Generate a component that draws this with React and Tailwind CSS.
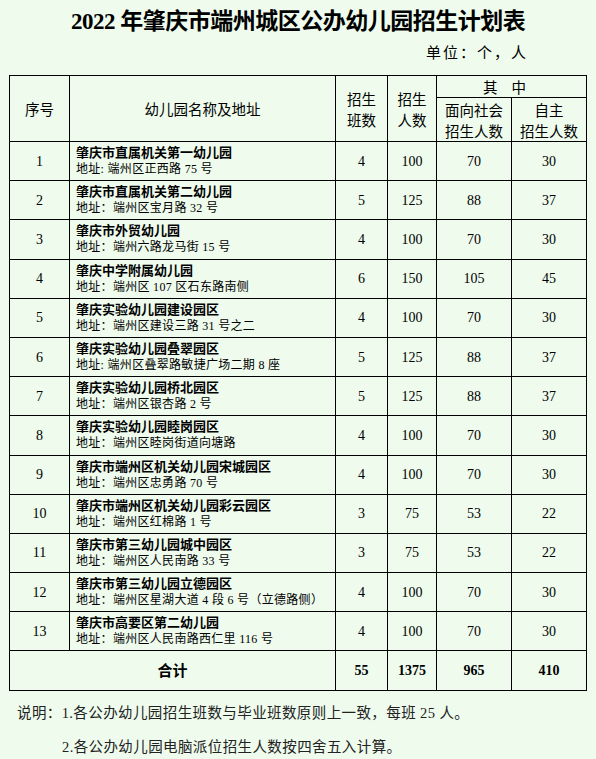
import React from "react";

const rows = [
  ["1", "肇庆市直属机关第一幼儿园", "地址: 端州区正西路 75 号", 4, 100, 70, 30],
  ["2", "肇庆市直属机关第二幼儿园", "地址：端州区宝月路 32 号", 5, 125, 88, 37],
  ["3", "肇庆市外贸幼儿园", "地址：端州六路龙马街 15 号", 4, 100, 70, 30],
  ["4", "肇庆中学附属幼儿园", "地址：端州区 107 区石东路南侧", 6, 150, 105, 45],
  ["5", "肇庆实验幼儿园建设园区", "地址：端州区建设三路 31 号之二", 4, 100, 70, 30],
  ["6", "肇庆实验幼儿园叠翠园区", "地址: 端州区叠翠路敏捷广场二期 8 座", 5, 125, 88, 37],
  ["7", "肇庆实验幼儿园桥北园区", "地址：端州区银杏路 2 号", 5, 125, 88, 37],
  ["8", "肇庆实验幼儿园睦岗园区", "地址：端州区睦岗街道向塘路", 4, 100, 70, 30],
  ["9", "肇庆市端州区机关幼儿园宋城园区", "地址：端州区忠勇路 70 号", 4, 100, 70, 30],
  ["10", "肇庆市端州区机关幼儿园彩云园区", "地址：端州区红棉路 1 号", 3, 75, 53, 22],
  ["11", "肇庆市第三幼儿园城中园区", "地址：端州区人民南路 33 号", 3, 75, 53, 22],
  ["12", "肇庆市第三幼儿园立德园区", "地址：端州区星湖大道 4 段 6 号（立德路侧）", 4, 100, 70, 30],
  ["13", "肇庆市高要区第二幼儿园", "地址：端州区人民南路西仁里 116 号", 4, 100, 70, 30],
];

const font = { fontFamily: '"Liberation Serif", "Noto Sans CJK SC", serif' };

export default function App() {
  return (
    <div
      className="w-[596px] h-[759px] bg-[#eefbed] text-black overflow-hidden"
      style={font}
    >
      <div className="pt-[7px] text-center text-[23px] leading-[30px] font-bold tracking-[-0.5px]">
        2022 年肇庆市端州城区公办幼儿园招生计划表
      </div>
      <div className="flex justify-end pr-[68px] mt-[5px] text-[15px] leading-[20px] tracking-[2px]" style={{ fontFamily: '"Noto Sans CJK SC", sans-serif' }}>
        单位：个，人
      </div>
      <table className="ml-[9px] mt-[13px] w-[577px] table-fixed border-collapse border border-black">
        <colgroup>
          <col className="w-[60px]" />
          <col className="w-[266px]" />
          <col className="w-[52px]" />
          <col className="w-[49px]" />
          <col className="w-[75px]" />
          <col className="w-[75px]" />
        </colgroup>
        <thead style={{ fontFamily: '"Noto Sans CJK SC", sans-serif' }} className="text-[14.5px] font-normal leading-[21px]">
          <tr className="h-[21px]">
            <th rowSpan={2} className="border border-black font-normal">序号</th>
            <th rowSpan={2} className="border border-black font-normal">幼儿园名称及地址</th>
            <th rowSpan={2} className="border border-black font-normal">招生<br />班数</th>
            <th rowSpan={2} className="border border-black font-normal">招生<br />人数</th>
            <th colSpan={2} className="border border-black font-normal tracking-[14px]">其中</th>
          </tr>
          <tr className="h-[44px]">
            <th className="border border-black font-normal">面向社会<br />招生人数</th>
            <th className="border border-black font-normal">自主<br />招生人数</th>
          </tr>
        </thead>
        <tbody>
          {rows.map((r) => (
            <tr key={r[0]} className="h-[39.2px]">
              <td className="border border-black text-center text-[14px]">{r[0]}</td>
              <td className="border border-black px-[6px] py-0">
                <div className="text-[13px] leading-[17px] font-bold">{r[1]}</div>
                <div className="text-[12px] leading-[17px] tracking-[0.3px]">{r[2]}</div>
              </td>
              <td className="border border-black text-center text-[14px]">{r[3]}</td>
              <td className="border border-black text-center text-[14px]">{r[4]}</td>
              <td className="border border-black text-center text-[14px]">{r[5]}</td>
              <td className="border border-black text-center text-[14px]">{r[6]}</td>
            </tr>
          ))}
          <tr className="h-[40px] font-bold text-[14px]">
            <td colSpan={2} className="border border-black text-center text-[15px]">合计</td>
            <td className="border border-black text-center">55</td>
            <td className="border border-black text-center">1375</td>
            <td className="border border-black text-center">965</td>
            <td className="border border-black text-center">410</td>
          </tr>
        </tbody>
      </table>
      <div className="mt-[5px] text-[14.5px] leading-[34px] text-[#222] tracking-[0.4px]" style={{ fontFamily: '"Liberation Serif", "Noto Sans CJK SC", serif' }}>
        <div className="pl-[17px]">说明：1.各公办幼儿园招生班数与毕业班数原则上一致，每班 25 人。</div>
        <div className="pl-[62px]">2.各公办幼儿园电脑派位招生人数按四舍五入计算。</div>
      </div>
    </div>
  );
}
